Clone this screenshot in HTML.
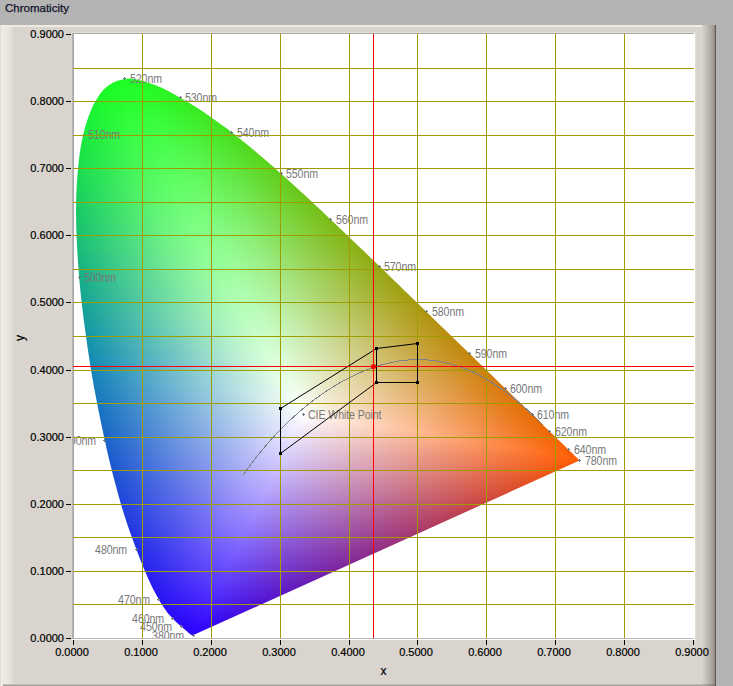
<!DOCTYPE html><html><head><meta charset="utf-8"><style>
*{margin:0;padding:0;box-sizing:border-box}
html,body{width:733px;height:686px;overflow:hidden;background:#b4b4b4;font-family:"Liberation Sans",sans-serif}
#title{position:absolute;left:5px;top:2px;font-size:11.5px;color:#10102a;letter-spacing:0px;-webkit-text-stroke:0.25px #10102a}
#panel{position:absolute;left:0;top:25px;width:716px;height:661px;background:#d9d5ce}
#plot{position:absolute;left:73px;top:34px;width:621px;height:604px;background:#fff;overflow:hidden}
.t{position:absolute;font-size:11px;color:#000;line-height:11px;white-space:nowrap;-webkit-text-stroke:0.2px #000}
.lb{position:absolute;font-size:12.6px;color:#787878;line-height:11px;white-space:nowrap;letter-spacing:-0.1px;transform:scaleX(0.84);transform-origin:0 50%}.lb.l{transform-origin:100% 50%}
#field{position:absolute}
#field i{position:absolute;left:0;width:100%;display:block}
</style></head><body><div id="title">Chromaticity</div><div id="panel"><div style="position:absolute;left:0;top:0;width:14px;height:661px;background:linear-gradient(90deg,#d6d2ca 0px,#efebe1 1px,#eeeae2 5px,#e6e2da 10px,#d9d5ce 14px)"></div><div style="position:absolute;left:0;top:0;width:708px;height:2px;background:linear-gradient(90deg,#e8e4da,#f2eee4 3px,#eeeae0 14px,#eeeae0)"></div><div style="position:absolute;left:3px;top:659px;width:700px;height:1px;background:#c4c0b8"></div><div style="position:absolute;left:3px;top:660px;width:700px;height:1px;background:#a29e98"></div><div style="position:absolute;left:702px;top:0;width:13px;height:661px;background:linear-gradient(90deg,#d9d5ce 0px,#d0ccc2 1.5px,#c2beb6 5px,#aeaaa2 9px,#9a968e 12px,#8c8882 13px)"></div><div style="position:absolute;left:715px;top:0;width:1px;height:661px;background:#5c5954"></div><div style="position:absolute;left:702px;top:659px;width:13px;height:2px;background:rgba(60,56,50,0.22)"></div></div><div id="plot"><div id="field" style="left:2px;top:43px;width:506px;height:560px;clip-path:polygon(118.4px 558.1px,118.4px 558.1px,118.4px 558.1px,118.4px 558.1px,118.4px 558.1px,118.4px 558.1px,118.4px 558.1px,118.3px 558.2px,118.3px 558.2px,118.3px 558.2px,118.3px 558.2px,118.3px 558.2px,118.2px 558.2px,118.2px 558.2px,118.2px 558.2px,118.2px 558.2px,118.1px 558.2px,118.1px 558.2px,118.1px 558.2px,118.1px 558.2px,118.0px 558.2px,118.0px 558.2px,118.0px 558.3px,117.9px 558.3px,117.9px 558.3px,117.9px 558.3px,117.8px 558.3px,117.8px 558.3px,117.8px 558.3px,117.7px 558.3px,117.7px 558.3px,117.6px 558.3px,117.6px 558.3px,117.6px 558.3px,117.5px 558.3px,117.5px 558.3px,117.4px 558.3px,117.4px 558.3px,117.3px 558.3px,117.2px 558.3px,117.2px 558.3px,117.1px 558.3px,117.1px 558.3px,117.0px 558.3px,116.9px 558.2px,116.8px 558.2px,116.8px 558.2px,116.7px 558.1px,116.6px 558.1px,116.5px 558.0px,116.4px 558.0px,116.2px 557.9px,116.1px 557.8px,116.0px 557.7px,115.8px 557.6px,115.7px 557.5px,115.5px 557.4px,115.4px 557.3px,115.2px 557.2px,115.0px 557.0px,114.9px 556.9px,114.7px 556.7px,114.4px 556.5px,114.2px 556.3px,114.0px 556.2px,113.7px 555.9px,113.5px 555.7px,113.2px 555.5px,112.9px 555.3px,112.7px 555.0px,112.4px 554.7px,112.1px 554.5px,111.8px 554.2px,111.4px 553.9px,111.1px 553.6px,110.7px 553.3px,110.3px 553.0px,109.9px 552.6px,109.5px 552.2px,109.0px 551.8px,108.5px 551.4px,108.0px 551.0px,107.5px 550.6px,107.0px 550.1px,106.4px 549.6px,105.8px 549.1px,105.2px 548.6px,104.6px 548.1px,103.9px 547.5px,103.2px 546.9px,102.5px 546.3px,101.8px 545.6px,101.0px 544.9px,100.2px 544.1px,99.4px 543.3px,98.6px 542.5px,97.7px 541.6px,96.8px 540.6px,95.9px 539.6px,95.0px 538.6px,94.0px 537.5px,92.9px 536.2px,91.8px 534.7px,90.7px 533.1px,89.5px 531.4px,88.2px 529.5px,86.8px 527.5px,85.4px 525.2px,84.0px 522.7px,82.5px 520.0px,80.9px 517.2px,79.3px 514.2px,77.6px 510.9px,75.8px 507.2px,74.0px 503.2px,72.1px 498.9px,70.1px 494.4px,68.0px 489.5px,65.9px 484.2px,63.7px 478.6px,61.4px 472.4px,59.0px 465.9px,56.4px 459.0px,53.8px 451.7px,51.2px 443.9px,48.5px 435.6px,45.8px 426.8px,43.2px 417.5px,40.5px 407.6px,37.8px 397.3px,35.1px 386.4px,32.4px 375.2px,29.8px 363.5px,27.2px 351.3px,24.5px 338.6px,21.9px 325.3px,19.3px 311.8px,16.9px 298.2px,14.7px 284.5px,12.6px 270.7px,10.6px 256.6px,8.7px 242.3px,6.9px 228.0px,5.4px 213.9px,4.1px 200.2px,3.1px 186.6px,2.2px 173.2px,1.6px 159.8px,1.2px 146.8px,1.0px 134.2px,1.2px 122.1px,1.6px 110.3px,2.4px 98.8px,3.4px 87.8px,4.6px 77.2px,6.2px 67.2px,8.1px 58.0px,10.3px 49.5px,12.8px 41.5px,15.6px 34.2px,18.6px 27.6px,21.9px 21.7px,25.3px 16.6px,28.9px 12.3px,32.8px 9.0px,36.9px 6.3px,41.1px 4.3px,45.4px 2.9px,49.7px 1.9px,54.1px 1.5px,58.6px 1.9px,63.2px 2.7px,67.9px 4.0px,72.5px 5.5px,77.2px 7.0px,81.8px 8.8px,86.5px 10.8px,91.2px 13.1px,95.9px 15.6px,100.5px 18.1px,105.1px 20.7px,109.6px 23.2px,114.0px 25.8px,118.4px 28.5px,122.8px 31.3px,127.1px 34.1px,131.4px 37.0px,135.7px 39.9px,139.9px 42.9px,144.1px 45.9px,148.3px 49.0px,152.5px 52.1px,156.7px 55.3px,160.9px 58.5px,165.0px 61.8px,169.2px 65.2px,173.3px 68.5px,177.5px 72.0px,181.6px 75.4px,185.7px 78.9px,189.9px 82.4px,194.0px 86.0px,198.1px 89.6px,202.2px 93.2px,206.3px 96.9px,210.4px 100.6px,214.5px 104.3px,218.6px 108.0px,222.7px 111.7px,226.8px 115.5px,230.9px 119.3px,235.0px 123.1px,239.1px 126.9px,243.2px 130.8px,247.3px 134.6px,251.4px 138.5px,255.5px 142.4px,259.6px 146.3px,263.7px 150.2px,267.8px 154.1px,271.9px 158.0px,276.0px 161.9px,280.1px 165.8px,284.1px 169.7px,288.2px 173.6px,292.3px 177.5px,296.4px 181.4px,300.4px 185.3px,304.4px 189.2px,308.5px 193.1px,312.5px 197.0px,316.5px 200.9px,320.4px 204.7px,324.4px 208.6px,328.3px 212.4px,332.3px 216.2px,336.2px 220.0px,340.1px 223.8px,343.9px 227.5px,347.8px 231.2px,351.6px 234.9px,355.3px 238.6px,359.1px 242.3px,362.8px 245.9px,366.5px 249.5px,370.2px 253.0px,373.8px 256.5px,377.4px 260.0px,381.0px 263.5px,384.5px 266.9px,388.0px 270.2px,391.4px 273.5px,394.8px 276.8px,398.1px 280.0px,401.3px 283.2px,404.6px 286.4px,407.7px 289.5px,410.8px 292.5px,413.8px 295.4px,416.8px 298.3px,419.6px 301.0px,422.4px 303.7px,425.1px 306.4px,427.8px 309.0px,430.4px 311.5px,433.0px 314.0px,435.5px 316.5px,438.0px 318.9px,440.4px 321.2px,442.8px 323.5px,445.0px 325.7px,447.2px 327.8px,449.4px 329.8px,451.4px 331.8px,453.4px 333.7px,455.3px 335.6px,457.2px 337.3px,459.0px 339.1px,460.7px 340.8px,462.4px 342.4px,464.0px 344.0px,465.5px 345.5px,467.0px 346.9px,468.5px 348.4px,469.8px 349.7px,471.2px 351.0px,472.4px 352.2px,473.7px 353.4px,474.9px 354.6px,476.0px 355.7px,477.1px 356.8px,478.2px 357.8px,479.2px 358.8px,480.2px 359.7px,481.1px 360.6px,482.1px 361.5px,482.9px 362.4px,483.8px 363.2px,484.6px 364.0px,485.4px 364.8px,486.2px 365.5px,486.9px 366.3px,487.7px 367.0px,488.4px 367.7px,489.1px 368.3px,489.7px 369.0px,490.4px 369.6px,491.0px 370.2px,491.6px 370.8px,492.2px 371.4px,492.8px 371.9px,493.3px 372.5px,493.8px 373.0px,494.3px 373.5px,494.8px 373.9px,495.3px 374.4px,495.7px 374.8px,496.2px 375.2px,496.6px 375.6px,497.0px 376.0px,497.3px 376.3px,497.7px 376.7px,498.0px 377.0px,498.3px 377.3px,498.6px 377.6px,498.9px 377.9px,499.2px 378.2px,499.5px 378.4px,499.7px 378.7px,500.0px 378.9px,500.2px 379.2px,500.4px 379.4px,500.7px 379.6px,500.9px 379.8px,501.1px 380.0px,501.2px 380.1px,501.4px 380.3px,501.5px 380.4px,501.7px 380.6px,501.8px 380.7px,501.9px 380.8px,502.0px 380.9px,502.2px 381.0px,502.3px 381.1px,502.4px 381.3px,502.5px 381.4px,502.6px 381.5px,502.7px 381.6px,502.8px 381.6px,502.9px 381.7px,502.9px 381.8px,503.0px 381.9px,503.1px 382.0px,503.2px 382.0px,503.3px 382.1px,503.3px 382.2px,503.4px 382.3px,503.5px 382.4px,503.6px 382.4px,503.7px 382.5px,503.7px 382.6px,503.8px 382.7px,503.9px 382.7px,504.0px 382.8px,504.0px 382.9px,504.1px 382.9px,504.2px 383.0px,504.2px 383.0px,504.3px 383.1px,504.3px 383.1px,504.4px 383.2px,504.4px 383.2px,504.4px 383.3px,504.5px 383.3px,504.5px 383.3px,504.5px 383.3px,504.5px 383.4px,504.5px 383.4px,504.6px 383.4px,504.6px 383.4px,504.6px 383.4px,504.6px 383.4px,504.6px 383.4px,504.6px 383.4px,504.6px 383.5px)"><i style="top:0px;height:2px;background:linear-gradient(90deg,#19f62e 0px,#1aff22 45px,#27f620 82px,#60cc18 199px,#80b613 300px,#9aa30f 448px,#a19e0e 506px)"></i><i style="top:2px;height:2px;background:linear-gradient(90deg,#19f52e 0px,#1aff22 45px,#27f620 83px,#60cd18 199px,#80b613 299px,#9aa30f 446px,#a19d0e 506px)"></i><i style="top:4px;height:2px;background:linear-gradient(90deg,#19f52f 0px,#1bfe23 42px,#21fa21 71px,#61cc17 202px,#80b513 302px,#9ba20f 450px,#a29d0e 506px)"></i><i style="top:6px;height:2px;background:linear-gradient(90deg,#19f42f 0px,#1bfe24 39px,#21fc24 65px,#2af320 91px,#60cc18 200px,#80b613 299px,#9aa20f 445px,#a29d0e 506px)"></i><i style="top:8px;height:2px;background:linear-gradient(90deg,#19f430 0px,#1bfe25 37px,#22fd26 64px,#2af420 91px,#60cc18 200px,#80b613 298px,#9aa30f 442px,#a29d0e 506px)"></i><i style="top:10px;height:2px;background:linear-gradient(90deg,#19f331 0px,#1cfd26 35px,#23fd27 64px,#2bf31f 94px,#61cc18 201px,#80b613 299px,#9ba20f 443px,#a29d0e 506px)"></i><i style="top:12px;height:2px;background:linear-gradient(90deg,#19f331 0px,#1cfc27 33px,#24fd29 64px,#2cf21f 97px,#61cc17 202px,#80b513 300px,#9ba20f 444px,#a29d0e 506px)"></i><i style="top:14px;height:2px;background:linear-gradient(90deg,#19f232 0px,#1cfc28 31px,#25fe2a 64px,#2ef11f 101px,#61cc17 203px,#80b513 300px,#9ba20f 444px,#a39d0e 506px)"></i><i style="top:16px;height:2px;background:linear-gradient(90deg,#19f232 0px,#1cfb29 29px,#26fe2c 64px,#2ff01f 104px,#62cb17 204px,#81b513 301px,#9ba20f 445px,#a39c0e 506px)"></i><i style="top:18px;height:2px;background:linear-gradient(90deg,#19f133 0px,#1cfa2a 28px,#27fe2d 64px,#2df321 98px,#66c917 214px,#84b312 314px,#9ea00e 464px,#a39c0e 506px)"></i><i style="top:20px;height:2px;background:linear-gradient(90deg,#19f134 0px,#1cf92b 26px,#28fe2f 64px,#2ef323 98px,#34ec1e 114px,#63cb17 207px,#82b413 304px,#9ca10f 448px,#a39c0e 506px)"></i><i style="top:22px;height:2px;background:linear-gradient(90deg,#19f034 0px,#1cf92c 25px,#28ff30 58px,#2ef82a 87px,#33ed1e 114px,#63cb17 207px,#82b413 303px,#9ca10f 446px,#a39c0e 506px)"></i><i style="top:24px;height:2px;background:linear-gradient(90deg,#19f035 0px,#1cf82d 24px,#29ff31 58px,#2ff82c 86px,#35eb1e 118px,#63ca17 209px,#82b413 305px,#9ca10f 448px,#a49c0e 506px)"></i><i style="top:26px;height:2px;background:linear-gradient(90deg,#19ef36 0px,#1cf72e 23px,#2aff32 57px,#30f92e 85px,#36eb1e 120px,#64ca17 210px,#83b412 306px,#9da10f 449px,#a49c0e 506px)"></i><i style="top:28px;height:2px;background:linear-gradient(90deg,#19ef36 0px,#1bf62f 21px,#2bfe33 55px,#31fa31 83px,#38ea1e 124px,#65c917 212px,#83b312 308px,#9da00e 452px,#a49c0e 506px)"></i><i style="top:30px;height:2px;background:linear-gradient(90deg,#19ee37 0px,#1bf630 20px,#2cfe34 55px,#32fb33 82px,#39e91d 127px,#65c917 213px,#84b312 309px,#9ea00e 453px,#a49b0d 506px)"></i><i style="top:32px;height:2px;background:linear-gradient(90deg,#19ee38 0px,#1bf531 19px,#2dfe35 55px,#33fb35 81px,#38ed22 119px,#3ce61d 133px,#67c817 217px,#85b212 314px,#9f9f0e 460px,#a49b0d 506px)"></i><i style="top:34px;height:2px;background:linear-gradient(90deg,#19ed38 0px,#1cf432 19px,#2efe37 55px,#34fc36 81px,#39ed25 118px,#3ce71d 133px,#67c817 217px,#85b212 313px,#9f9f0e 458px,#a59b0d 506px)"></i><i style="top:36px;height:2px;background:linear-gradient(90deg,#19ed39 0px,#1cf333 18px,#2ffe38 55px,#35fc38 81px,#3aee26 118px,#3de61d 136px,#67c817 218px,#85b212 314px,#9f9f0e 459px,#a59b0d 506px)"></i><i style="top:38px;height:2px;background:linear-gradient(90deg,#19ec3a 0px,#1bf334 17px,#30fe39 55px,#36fc39 81px,#3bef29 117px,#3ee51d 138px,#67c717 219px,#86b112 315px,#9f9f0e 460px,#a59b0d 506px)"></i><i style="top:40px;height:2px;background:linear-gradient(90deg,#19eb3a 0px,#1bf235 16px,#31fe3a 55px,#38fd3b 81px,#3cf02b 116px,#40e41c 141px,#68c716 221px,#86b112 317px,#a09f0e 462px,#a59b0d 506px)"></i><i style="top:42px;height:2px;background:linear-gradient(90deg,#19eb3b 0px,#1cf136 16px,#33fe3c 56px,#39fd3c 82px,#3ef02d 117px,#40e31c 143px,#69c616 223px,#87b112 319px,#a09e0e 465px,#a59b0d 506px)"></i><i style="top:44px;height:2px;background:linear-gradient(90deg,#19ea3c 0px,#1bf037 15px,#33fd3d 55px,#3afd3e 82px,#3ff02f 117px,#42e21c 146px,#6ac616 225px,#88b012 321px,#a19e0e 467px,#a69a0d 506px)"></i><i style="top:46px;height:2px;background:linear-gradient(90deg,#19ea3d 0px,#1bef38 14px,#34fd3e 55px,#3bfd3f 83px,#40f131 117px,#43e11c 149px,#6ac516 227px,#88af12 324px,#a29d0e 471px,#a69a0d 506px)"></i><i style="top:48px;height:2px;background:linear-gradient(90deg,#19e93d 0px,#1cef39 14px,#36fd3f 56px,#3dfd40 84px,#42f132 118px,#45e01c 152px,#6bc416 229px,#89af12 326px,#a29d0e 474px,#a69a0d 506px)"></i><i style="top:50px;height:2px;background:linear-gradient(90deg,#18e83e 0px,#1bee3a 13px,#36fd40 56px,#3efd42 84px,#43f134 118px,#46e01c 154px,#6cc416 230px,#89af11 326px,#a29d0e 473px,#a69a0d 506px)"></i><i style="top:52px;height:2px;background:linear-gradient(90deg,#18e83f 0px,#1ced3b 13px,#38fd42 57px,#3ffd43 85px,#44f135 119px,#47df1b 157px,#6dc316 233px,#8aae11 330px,#a39c0e 479px,#a69a0d 506px)"></i><i style="top:54px;height:2px;background:linear-gradient(90deg,#18e740 0px,#1bec3c 12px,#38fc43 56px,#41fd45 86px,#45f136 120px,#48de1b 159px,#6dc316 234px,#8bae11 331px,#a49c0e 480px,#a79a0d 506px)"></i><i style="top:56px;height:2px;background:linear-gradient(90deg,#18e741 0px,#1cec3d 12px,#3afc44 57px,#42fd46 87px,#47f138 121px,#4add1b 162px,#6ec215 237px,#8cad11 334px,#a49b0d 484px,#a7990d 506px)"></i><i style="top:58px;height:2px;background:linear-gradient(90deg,#18e641 0px,#1beb3e 11px,#3afc45 57px,#43fe47 87px,#48f23a 120px,#4adc1b 164px,#6fc215 238px,#8cad11 335px,#a59b0d 485px,#a7990d 506px)"></i><i style="top:60px;height:2px;background:linear-gradient(90deg,#18e542 0px,#1bea3f 11px,#3cfc47 58px,#44fe49 88px,#49f23b 121px,#4cdb1b 167px,#70c115 241px,#8dac11 339px,#a69a0d 491px,#a7990d 506px)"></i><i style="top:62px;height:2px;background:linear-gradient(90deg,#18e543 0px,#1be940 10px,#3cfb48 57px,#46fe4a 89px,#4bf23d 122px,#4dda1a 169px,#71c115 242px,#8dac11 340px,#a69a0d 492px,#a8990d 506px)"></i><i style="top:64px;height:2px;background:linear-gradient(90deg,#18e444 0px,#1be841 10px,#3dfb49 57px,#47fe4b 89px,#4cf33f 121px,#4ddb1b 168px,#72bf15 247px,#8fab11 346px,#a7990d 501px,#a8990d 506px)"></i><i style="top:66px;height:2px;background:linear-gradient(90deg,#18e345 0px,#1be842 10px,#3efb4a 58px,#48fe4d 90px,#4df340 122px,#4edb1d 169px,#74be15 251px,#90aa10 352px,#a8990d 506px)"></i><i style="top:68px;height:2px;background:linear-gradient(90deg,#18e346 0px,#1be743 9px,#3ffb4b 58px,#49fe4e 91px,#4ef342 123px,#4fdb1e 170px,#53d61a 180px,#75be15 253px,#91a910 354px,#a8990d 506px)"></i><i style="top:70px;height:2px;background:linear-gradient(90deg,#18e246 0px,#1ce644 10px,#40fb4c 59px,#4bfe4f 92px,#50f343 124px,#50db1f 171px,#53d61a 181px,#75bd14 254px,#91a910 355px,#a8980d 506px)"></i><i style="top:72px;height:2px;background:linear-gradient(90deg,#18e147 0px,#1be545 9px,#40fa4d 58px,#4cfe51 92px,#51f345 124px,#52dc22 170px,#53d619 182px,#75bd14 254px,#91a910 354px,#a9980d 506px)"></i><i style="top:74px;height:2px;background:linear-gradient(90deg,#18e048 0px,#1ce546 9px,#42fa4f 59px,#4dfe52 93px,#52f447 124px,#53dd24 170px,#54d519 184px,#76bd14 256px,#92a910 356px,#a9980d 506px)"></i><i style="top:76px;height:2px;background:linear-gradient(90deg,#18e049 0px,#1ce447 9px,#42fa50 59px,#4efe53 93px,#54f448 124px,#55dd26 170px,#55d419 186px,#77bc14 258px,#93a810 359px,#a9980d 506px)"></i><i style="top:78px;height:2px;background:linear-gradient(90deg,#18df4a 0px,#1de449 10px,#44fa51 60px,#50fe55 94px,#55f44a 125px,#56dd27 171px,#56d419 188px,#78bb14 260px,#93a710 361px,#a9980d 506px)"></i><i style="top:80px;height:2px;background:linear-gradient(90deg,#18de4b 0px,#1ce34a 9px,#44f952 60px,#50ff56 91px,#56f74f 119px,#57e230 163px,#57d319 190px,#79bb14 262px,#94a710 364px,#aa980d 506px)"></i><i style="top:82px;height:2px;background:linear-gradient(90deg,#18de4c 0px,#1de24b 9px,#45f954 60px,#51ff57 91px,#57f851 118px,#59e333 162px,#59d219 193px,#7aba14 265px,#95a610 367px,#aa970d 506px)"></i><i style="top:84px;height:2px;background:linear-gradient(90deg,#18dd4d 0px,#1de14c 9px,#45f855 60px,#52ff58 91px,#58f853 118px,#5ae436 161px,#5ad119 195px,#7bb914 267px,#96a610 370px,#aa970d 506px)"></i><i style="top:86px;height:2px;background:linear-gradient(90deg,#18dc4e 0px,#1fe24d 11px,#47f956 62px,#54ff5a 92px,#59f854 119px,#5be437 162px,#5bd018 197px,#7bb914 269px,#97a510 372px,#aa970d 506px)"></i><i style="top:88px;height:2px;background:linear-gradient(90deg,#18db4e 0px,#20e14e 12px,#49f957 63px,#55ff5b 93px,#5bf856 120px,#5de438 163px,#5cd018 199px,#7cb813 271px,#97a50f 375px,#ab970d 506px)"></i><i style="top:90px;height:2px;background:linear-gradient(90deg,#18db4f 0px,#1fe04f 11px,#49f859 63px,#56ff5c 94px,#5cf857 121px,#5ee43a 164px,#5dce18 202px,#7db713 274px,#98a40f 379px,#ab970c 506px)"></i><i style="top:92px;height:2px;background:linear-gradient(90deg,#17da50 0px,#1fe050 11px,#4af85a 63px,#57ff5e 94px,#5df959 120px,#5fe53d 162px,#5ece18 204px,#7eb713 276px,#99a30f 381px,#ab960c 506px)"></i><i style="top:94px;height:2px;background:linear-gradient(90deg,#17d951 0px,#22e052 14px,#4cf85b 66px,#59ff5f 96px,#5ef85a 122px,#61e53e 164px,#5fcd18 206px,#7fb613 278px,#9aa30f 384px,#ab960c 506px)"></i><i style="top:96px;height:2px;background:linear-gradient(90deg,#17d852 0px,#29e355 21px,#50fa5d 71px,#5cfe61 104px,#61f455 134px,#61dd32 179px,#60cc18 208px,#80b613 280px,#9aa20f 386px,#ac960c 506px)"></i><i style="top:98px;height:2px;background:linear-gradient(90deg,#17d853 0px,#4ff85e 68px,#5cff62 98px,#61f85c 124px,#63e540 166px,#62cb17 211px,#81b513 284px,#9ca20f 392px,#ac960c 506px)"></i><i style="top:100px;height:2px;background:linear-gradient(90deg,#17d754 0px,#50f85f 68px,#5dff63 98px,#62f95e 124px,#64e542 166px,#63ca17 213px,#82b413 286px,#9ca10f 394px,#ac960c 506px)"></i><i style="top:102px;height:2px;background:linear-gradient(90deg,#17d655 0px,#50f760 68px,#5eff64 98px,#63fa60 123px,#66e746 164px,#64ca17 215px,#83b312 288px,#9da00f 397px,#ac960c 506px)"></i><i style="top:104px;height:2px;background:linear-gradient(90deg,#17d556 0px,#51f761 68px,#5fff65 99px,#65fa62 124px,#67e747 165px,#65c917 217px,#84b312 290px,#9ea00e 399px,#ad950c 506px)"></i><i style="top:106px;height:2px;background:linear-gradient(90deg,#17d457 0px,#51f762 68px,#61ff67 99px,#66fa63 124px,#68e84a 164px,#66c817 219px,#85b212 292px,#9f9f0e 402px,#ad950c 506px)"></i><i style="top:108px;height:2px;background:linear-gradient(90deg,#17d458 0px,#53f664 69px,#62ff68 100px,#67fa65 125px,#6ae84b 165px,#68c716 222px,#86b112 296px,#a09f0e 407px,#ad950c 506px)"></i><i style="top:110px;height:2px;background:linear-gradient(90deg,#17d359 0px,#53f665 69px,#63ff69 101px,#69fa66 126px,#6be84c 166px,#69c616 224px,#87b112 298px,#a09e0e 410px,#ad950c 506px)"></i><i style="top:112px;height:2px;background:linear-gradient(90deg,#17d25a 0px,#54f566 69px,#64fe6a 101px,#6afa68 126px,#6ce94f 165px,#6ac516 226px,#88b012 300px,#a19e0e 413px,#ae950c 506px)"></i><i style="top:114px;height:2px;background:linear-gradient(90deg,#17d15b 0px,#55f567 70px,#66fe6c 102px,#6bfa69 127px,#6ee950 166px,#6bc516 228px,#89af12 302px,#a29d0e 415px,#ae940c 506px)"></i><i style="top:116px;height:2px;background:linear-gradient(90deg,#17d05c 0px,#55f568 70px,#67fe6d 102px,#6cfb6b 127px,#6fea53 165px,#6cc416 230px,#89af11 304px,#a39d0e 418px,#ae940c 506px)"></i><i style="top:118px;height:2px;background:linear-gradient(90deg,#17d05d 0px,#57f56a 71px,#68fe6e 103px,#6efb6c 128px,#70ea54 166px,#6dc316 232px,#8aae11 307px,#a39c0e 422px,#af940c 506px)"></i><i style="top:120px;height:2px;background:linear-gradient(90deg,#17cf5e 0px,#58f56b 72px,#69fe70 104px,#6ffb6d 129px,#72ea56 167px,#6fc215 235px,#8cad11 310px,#a49b0d 426px,#af940c 506px)"></i><i style="top:122px;height:2px;background:linear-gradient(90deg,#17ce5f 0px,#58f46c 72px,#6bfe71 105px,#70fb6f 130px,#73ea57 168px,#70c115 237px,#8cad11 312px,#a59b0d 429px,#af940c 506px)"></i><i style="top:124px;height:2px;background:linear-gradient(90deg,#17cd60 0px,#59f46d 73px,#6cfe72 106px,#72fb70 131px,#74ea58 169px,#71c115 239px,#8dac11 315px,#a69a0d 433px,#af930c 506px)"></i><i style="top:126px;height:2px;background:linear-gradient(90deg,#17cc61 0px,#5af46f 73px,#6dfe73 107px,#73fb71 132px,#75ea59 170px,#72c015 241px,#8eab11 317px,#a79a0d 436px,#b0930c 506px)"></i><i style="top:128px;height:2px;background:linear-gradient(90deg,#16cc62 0px,#5bf470 74px,#6ffe75 108px,#74fb73 133px,#77ea5a 171px,#73bf15 243px,#8fab11 319px,#a7990d 438px,#b0930c 506px)"></i><i style="top:130px;height:2px;background:linear-gradient(90deg,#16cb63 0px,#5cf371 75px,#70fe76 109px,#75fb74 133px,#78eb5d 170px,#74c41d 236px,#74be15 246px,#90aa10 323px,#a9980d 444px,#b0930c 506px)"></i><i style="top:132px;height:2px;background:linear-gradient(90deg,#16ca64 0px,#5df372 76px,#71fe77 110px,#77fb76 134px,#79eb5e 171px,#75c31d 238px,#75bd14 248px,#91a910 325px,#a9980d 447px,#b1930c 506px)"></i><i style="top:134px;height:2px;background:linear-gradient(90deg,#16c965 0px,#5ef374 76px,#72fe79 110px,#78fc78 133px,#7bec62 169px,#77c826 231px,#76bc14 250px,#92a810 328px,#aa970d 451px,#b1920c 506px)"></i><i style="top:136px;height:2px;background:linear-gradient(90deg,#16c866 0px,#5ff375 77px,#74fe7a 111px,#79fc79 134px,#7cec63 170px,#78c726 233px,#77bc14 252px,#93a810 330px,#ab970c 454px,#b1920c 506px)"></i><i style="top:138px;height:2px;background:linear-gradient(90deg,#16c767 0px,#60f376 78px,#75fe7b 112px,#7afc7a 135px,#7dec65 171px,#79c626 235px,#78bb14 254px,#94a710 332px,#ac960c 457px,#b1920c 506px)"></i><i style="top:140px;height:2px;background:linear-gradient(90deg,#16c768 0px,#62f277 79px,#76fe7d 113px,#7cfc7b 136px,#7fed67 171px,#7bc729 234px,#7aba14 256px,#95a610 335px,#ac960c 461px,#b2920b 506px)"></i><i style="top:142px;height:2px;background:linear-gradient(90deg,#16c669 0px,#63f279 80px,#78fe7e 114px,#7dfc7d 137px,#80ed68 172px,#7cc72a 235px,#7bb914 258px,#96a610 337px,#ad950c 464px,#b2910b 506px)"></i><i style="top:144px;height:2px;background:linear-gradient(90deg,#16c56b 0px,#64f27a 81px,#79fe7f 115px,#7ffc7e 138px,#81ec69 173px,#7dc72a 237px,#7cb914 260px,#97a50f 339px,#ae950c 467px,#b2910b 506px)"></i><i style="top:146px;height:2px;background:linear-gradient(90deg,#16c46c 0px,#65f27b 82px,#7afe80 116px,#80fc80 138px,#83ed6b 173px,#7ec82e 236px,#7db813 262px,#98a40f 342px,#af940c 471px,#b3910b 506px)"></i><i style="top:148px;height:2px;background:linear-gradient(90deg,#16c36d 0px,#66f27d 83px,#7cfe82 118px,#81fc80 141px,#84ec6b 176px,#7fc326 245px,#7eb713 264px,#99a40f 344px,#af930c 474px,#b3910b 506px)"></i><i style="top:150px;height:2px;background:linear-gradient(90deg,#16c26e 0px,#67f27e 84px,#7dfe83 119px,#83fc82 142px,#85ec6c 177px,#80c226 247px,#7fb613 266px,#9aa30f 347px,#b0930c 479px,#b3910b 506px)"></i><i style="top:152px;height:2px;background:linear-gradient(90deg,#16c16f 0px,#69f27f 85px,#7ffe84 120px,#84fc83 142px,#86ec6e 177px,#82c42a 245px,#80b613 268px,#9aa30f 349px,#b1920c 481px,#b4900b 506px)"></i><i style="top:154px;height:2px;background:linear-gradient(90deg,#16c170 0px,#6af280 86px,#80fe86 121px,#85fc85 143px,#88ed70 177px,#83c52d 244px,#81b513 270px,#9ba20f 352px,#b2920b 486px,#b4900b 506px)"></i><i style="top:156px;height:2px;background:linear-gradient(90deg,#16c071 0px,#6bf282 87px,#81fe87 122px,#87fc86 144px,#89ed71 178px,#84c42d 246px,#82b412 273px,#9da10f 356px,#b3910b 492px,#b4900b 506px)"></i><i style="top:158px;height:2px;background:linear-gradient(90deg,#16bf72 0px,#6df283 89px,#83fe88 123px,#88fc87 145px,#8aed72 179px,#85c32d 248px,#84b312 275px,#9da00e 358px,#b3900b 495px,#b5900b 506px)"></i><i style="top:160px;height:2px;background:linear-gradient(90deg,#16be73 0px,#6ef284 90px,#84fe8a 124px,#89fc89 146px,#8ced73 180px,#86c22c 251px,#85b212 277px,#9ea00e 361px,#b4900b 500px,#b58f0b 506px)"></i><i style="top:162px;height:2px;background:linear-gradient(90deg,#15bd74 0px,#6ff286 91px,#85fe8b 125px,#8bfc8a 147px,#8ded75 181px,#87c12c 253px,#86b112 279px,#9f9f0e 363px,#b58f0b 503px,#b58f0b 506px)"></i><i style="top:164px;height:2px;background:linear-gradient(90deg,#15bc75 0px,#71f287 93px,#87fe8c 127px,#8cfb8b 150px,#8eeb73 185px,#87b81d 269px,#87b112 281px,#a09e0e 366px,#b68f0b 506px)"></i><i style="top:166px;height:2px;background:linear-gradient(90deg,#15bb76 0px,#72f289 94px,#88fe8e 128px,#8dfc8c 150px,#90ec76 184px,#89bd27 262px,#88b012 283px,#a19e0e 369px,#b68f0b 506px)"></i><i style="top:168px;height:2px;background:linear-gradient(90deg,#15bb77 0px,#3bd17e 37px,#79f58b 101px,#8bff8f 132px,#8ffb8c 154px,#91e973 190px,#89af12 285px,#a29d0e 371px,#b68e0b 506px)"></i><i style="top:170px;height:2px;background:linear-gradient(90deg,#15ba79 0px,#2ec97d 25px,#76f28b 97px,#8bfe90 130px,#90fc8f 152px,#92ec79 186px,#8bba24 268px,#8aae11 287px,#a39c0e 374px,#b78e0b 506px)"></i><i style="top:172px;height:2px;background:linear-gradient(90deg,#15b97a 0px,#27c47c 18px,#74f18c 95px,#8cfe92 130px,#91fc91 152px,#93ed7b 185px,#8dbe2d 262px,#8bae11 289px,#a49c0e 376px,#b78e0b 506px)"></i><i style="top:174px;height:2px;background:linear-gradient(90deg,#15b87b 0px,#22c07c 14px,#74ef8d 94px,#8dfe93 130px,#92fd92 151px,#95ef7f 183px,#90c53a 252px,#8cad11 291px,#a59b0d 379px,#b78e0b 506px)"></i><i style="top:176px;height:2px;background:linear-gradient(90deg,#15b77c 0px,#1fbd7d 11px,#73ee8e 93px,#8efd94 130px,#94fd94 152px,#96ef80 184px,#91c43a 254px,#8dac11 293px,#a69a0d 381px,#b88d0b 506px)"></i><i style="top:178px;height:2px;background:linear-gradient(90deg,#15b67d 0px,#1dbc7e 10px,#74ee8f 94px,#8ffd95 131px,#95fd95 153px,#97ef82 185px,#92c339 257px,#8eab11 295px,#a79a0d 384px,#b88d0b 506px)"></i><i style="top:180px;height:2px;background:linear-gradient(90deg,#15b57e 0px,#1cba7e 9px,#75ee90 95px,#90fd97 132px,#96fd97 153px,#99f084 184px,#94c842 250px,#8faa11 297px,#a8990d 387px,#b88d0a 506px)"></i><i style="top:182px;height:2px;background:linear-gradient(90deg,#15b47f 0px,#1bb97f 8px,#75ed91 95px,#91fd98 132px,#98fd98 154px,#9af086 185px,#95c741 253px,#91a910 300px,#a9980d 391px,#b98d0a 506px)"></i><i style="top:184px;height:2px;background:linear-gradient(90deg,#15b480 0px,#19b780 7px,#77ed93 96px,#93fd99 133px,#99fd99 155px,#9bef87 186px,#96c540 256px,#92a910 302px,#aa970d 394px,#b98c0a 506px)"></i><i style="top:186px;height:2px;background:linear-gradient(90deg,#15b381 0px,#1ab781 8px,#78ed94 97px,#94fd9a 134px,#9afd9b 156px,#9def88 187px,#97c440 258px,#93a810 304px,#ab970d 397px,#ba8c0a 506px)"></i><i style="top:188px;height:2px;background:linear-gradient(90deg,#15b282 0px,#1ab682 8px,#79ed95 98px,#95fd9c 135px,#9cfd9c 157px,#9eef89 188px,#98c33f 261px,#94a710 306px,#ab960c 399px,#ba8c0a 506px)"></i><i style="top:190px;height:2px;background:linear-gradient(90deg,#15b184 0px,#1ab583 8px,#7aed97 99px,#97fd9d 137px,#9dfd9d 158px,#9fef8a 189px,#99c23e 264px,#95a610 308px,#ac960c 402px,#ba8c0a 506px)"></i><i style="top:192px;height:2px;background:linear-gradient(90deg,#15b085 0px,#1ab484 8px,#7bed98 100px,#98fd9e 138px,#9efd9f 159px,#a0f08c 189px,#9bc342 262px,#96a610 310px,#ad950c 405px,#bb8b0a 506px)"></i><i style="top:194px;height:2px;background:linear-gradient(90deg,#15af86 0px,#18b285 7px,#7cec99 101px,#9afda0 139px,#a0fda0 160px,#a2f08e 190px,#9cc241 265px,#97a50f 312px,#ae940c 408px,#bb8b0a 506px)"></i><i style="top:196px;height:2px;background:linear-gradient(90deg,#14ae87 0px,#18b186 7px,#7dec9a 102px,#9bfda1 140px,#a1fda1 161px,#a3f08f 191px,#9dc140 268px,#98a40f 314px,#af940c 410px,#bb8b0a 506px)"></i><i style="top:198px;height:2px;background:linear-gradient(90deg,#14ad88 0px,#18b087 7px,#7fed9c 104px,#9cfda2 141px,#a2fda3 162px,#a4f090 192px,#9ebf3e 272px,#99a30f 316px,#b0930c 413px,#bc8a0a 506px)"></i><i style="top:200px;height:2px;background:linear-gradient(90deg,#14ac89 0px,#18af88 7px,#80ec9d 105px,#9dfda4 142px,#a4fda4 163px,#a6f091 193px,#9ebd3b 276px,#9aa20f 318px,#b1920c 416px,#bc8a0a 506px)"></i><i style="top:202px;height:2px;background:linear-gradient(90deg,#14ac8a 0px,#18af89 8px,#81ec9e 106px,#9ffda5 143px,#a5fda5 164px,#a7f092 194px,#9fba38 281px,#9ca20f 320px,#b2920b 419px,#bd8a0a 506px)"></i><i style="top:204px;height:2px;background:linear-gradient(90deg,#14ab8b 0px,#18ae8a 8px,#83eda0 108px,#a1fda6 145px,#a6fda7 165px,#a8f094 194px,#a1bc3d 278px,#9da10f 322px,#b3910b 422px,#bd8a0a 506px)"></i><i style="top:206px;height:2px;background:linear-gradient(90deg,#14aa8c 0px,#18ad8b 8px,#85eca1 109px,#a2fda8 146px,#a8fda8 166px,#aaf096 195px,#a2ba3a 283px,#9ea00e 324px,#b4900b 425px,#bd890a 506px)"></i><i style="top:208px;height:2px;background:linear-gradient(90deg,#14a98d 0px,#17ac8c 7px,#86eca2 110px,#a3fda9 147px,#a9fda9 167px,#abf097 196px,#a2b636 289px,#9f9f0e 326px,#b5900b 428px,#be890a 506px)"></i><i style="top:210px;height:2px;background:linear-gradient(90deg,#14a88e 0px,#17ab8d 8px,#88eda4 112px,#a4fdaa 148px,#aafdaa 168px,#acf098 197px,#a3b331 295px,#a09e0e 329px,#b68f0b 433px,#be890a 506px)"></i><i style="top:212px;height:2px;background:linear-gradient(90deg,#14a790 0px,#17aa8f 8px,#89eda5 113px,#a6fdab 149px,#acfdac 169px,#adf099 198px,#a4af2c 302px,#a19e0e 331px,#b78e0b 436px,#bf880a 506px)"></i><i style="top:214px;height:2px;background:linear-gradient(90deg,#14a691 0px,#17a990 8px,#8aeca6 114px,#a8fdad 151px,#adfdad 171px,#afef99 200px,#a3a419 321px,#a29d0e 333px,#b88e0b 439px,#bf8809 506px)"></i><i style="top:216px;height:2px;background:linear-gradient(90deg,#14a592 0px,#17a891 8px,#8ceda8 116px,#a9fdae 152px,#affdae 172px,#b0ef9b 201px,#a39e11 330px,#a49b0d 338px,#b98c0a 447px,#c08809 506px)"></i><i style="top:218px;height:2px;background:linear-gradient(90deg,#14a593 0px,#16a792 8px,#8deda9 117px,#aafdb0 153px,#b0fdb0 172px,#b1f09e 200px,#a6aa26 313px,#a59b0d 337px,#b98c0a 445px,#c08709 506px)"></i><i style="top:220px;height:2px;background:linear-gradient(90deg,#14a494 0px,#16a693 8px,#8eecaa 118px,#abfdb1 154px,#b1fdb1 173px,#b3f09f 201px,#a7a51e 322px,#a69a0d 339px,#ba8c0a 448px,#c08709 506px)"></i><i style="top:222px;height:2px;background:linear-gradient(90deg,#14a395 0px,#17a694 9px,#90edac 120px,#adfdb2 156px,#b3fdb2 175px,#b4ef9e 204px,#a79a0d 341px,#bb8b0a 452px,#c18709 506px)"></i><i style="top:224px;height:2px;background:linear-gradient(90deg,#14a296 0px,#16a595 9px,#92edad 122px,#affdb4 157px,#b4fdb3 176px,#b5ef9f 205px,#a8990d 343px,#bc8a0a 455px,#c18609 506px)"></i><i style="top:226px;height:2px;background:linear-gradient(90deg,#14a197 0px,#16a496 9px,#93edaf 123px,#b0fdb5 158px,#b5fdb5 177px,#b6efa0 206px,#a9980d 345px,#bd8a0a 458px,#c28609 506px)"></i><i style="top:228px;height:2px;background:linear-gradient(90deg,#14a098 0px,#16a397 9px,#95edb0 125px,#b2fdb6 160px,#b7fdb6 179px,#b8eea1 208px,#aa970d 347px,#be890a 462px,#c28609 506px)"></i><i style="top:230px;height:2px;background:linear-gradient(90deg,#139f99 0px,#16a298 9px,#96edb1 126px,#b3fdb8 161px,#b8fdb7 180px,#b9eea2 209px,#ab970c 349px,#bf880a 465px,#c38509 506px)"></i><i style="top:232px;height:2px;background:linear-gradient(90deg,#139e9a 0px,#16a299 10px,#98eeb3 128px,#b4fdb9 162px,#b9fdb8 181px,#baeea3 210px,#ac960c 351px,#bf8809 468px,#c38509 506px)"></i><i style="top:234px;height:2px;background:linear-gradient(90deg,#139e9c 0px,#16a19a 10px,#99edb4 129px,#b5fdba 163px,#bbfdba 182px,#bceea4 211px,#ad950c 353px,#c08709 472px,#c48509 506px)"></i><i style="top:236px;height:2px;background:linear-gradient(90deg,#139d9d 0px,#16a09b 10px,#9beeb6 131px,#b7febc 165px,#bcfdbb 183px,#bdeea5 212px,#ae940c 355px,#c18609 475px,#c48409 506px)"></i><i style="top:238px;height:2px;background:linear-gradient(90deg,#139c9e 0px,#159f9c 10px,#9ceeb7 132px,#b9febd 166px,#befdbc 184px,#beeea6 213px,#af930c 357px,#c28609 479px,#c58409 506px)"></i><i style="top:240px;height:2px;background:linear-gradient(90deg,#139b9f 0px,#159e9d 10px,#9feeb8 134px,#bafebe 168px,#bffcbd 186px,#bfeda5 216px,#b0930c 359px,#c38509 483px,#c58409 506px)"></i><i style="top:242px;height:2px;background:linear-gradient(90deg,#139aa0 0px,#169d9e 11px,#a1eeba 136px,#bcfec0 169px,#c0fcbe 187px,#c0eda7 217px,#b2920c 361px,#c48509 486px,#c68309 506px)"></i><i style="top:244px;height:2px;background:linear-gradient(90deg,#1399a1 0px,#159c9f 11px,#a2eebb 137px,#bdfec1 170px,#c2fcc0 188px,#c2eda8 218px,#b3910b 363px,#c58409 490px,#c68308 506px)"></i><i style="top:246px;height:2px;background:linear-gradient(90deg,#1398a2 0px,#159ba0 11px,#a4efbd 139px,#bffec2 172px,#c3fcc0 190px,#c3eba7 221px,#b4900b 365px,#c68309 494px,#c78308 506px)"></i><i style="top:248px;height:2px;background:linear-gradient(90deg,#1398a3 0px,#159aa1 11px,#a6efbe 141px,#c0fec4 173px,#c4fcc2 191px,#c4eba8 222px,#b58f0b 367px,#c78308 498px,#c78208 506px)"></i><i style="top:250px;height:2px;background:linear-gradient(90deg,#1397a4 0px,#159aa3 12px,#a7efbf 142px,#c1fec5 174px,#c6fcc4 191px,#c6edac 220px,#b68f0b 370px,#c88208 504px,#c88208 506px)"></i><i style="top:252px;height:2px;background:linear-gradient(90deg,#1396a5 0px,#1599a4 12px,#a9efc1 144px,#c3fec6 176px,#c7fcc4 193px,#c7ebaa 224px,#b78e0b 372px,#c88108 506px)"></i><i style="top:254px;height:2px;background:linear-gradient(90deg,#1395a6 0px,#1598a5 12px,#abefc2 146px,#c4fec8 177px,#c8fcc6 194px,#c8ebab 225px,#b88d0b 374px,#c98108 506px)"></i><i style="top:256px;height:2px;background:linear-gradient(90deg,#1394a7 0px,#1497a6 12px,#adf0c4 148px,#c6fec9 179px,#cafcc6 196px,#c9eaaa 228px,#b98c0a 376px,#c98108 506px)"></i><i style="top:258px;height:2px;background:linear-gradient(90deg,#1393a8 0px,#1596a7 13px,#aff0c5 150px,#c8fecb 180px,#cbfcc8 197px,#cae9aa 230px,#ba8b0a 378px,#ca8008 506px)"></i><i style="top:260px;height:2px;background:linear-gradient(90deg,#1392aa 0px,#1595a8 13px,#b0f0c6 151px,#c9fecc 181px,#cdfcc9 198px,#cbe9ab 231px,#bc8b0a 380px,#ca8008 506px)"></i><i style="top:262px;height:2px;background:linear-gradient(90deg,#1392ab 0px,#1494a9 13px,#b2f0c8 153px,#cbfecd 183px,#cefcca 199px,#cce8ab 233px,#bd8a0a 382px,#cb7f08 506px)"></i><i style="top:264px;height:2px;background:linear-gradient(90deg,#1291ac 0px,#1493aa 13px,#b4f1c9 155px,#ccfecf 184px,#cffbcb 200px,#cee8ac 234px,#be890a 384px,#cc7f08 506px)"></i><i style="top:266px;height:2px;background:linear-gradient(90deg,#1290ad 0px,#1593ab 14px,#b6f1cb 157px,#cdfed0 185px,#d1fbcd 201px,#cfe7ac 236px,#bf880a 386px,#cc7f08 506px)"></i><i style="top:268px;height:2px;background:linear-gradient(90deg,#128fae 0px,#1492ac 14px,#b8f2cc 159px,#cfffd1 187px,#d2fbcd 203px,#cfe3a7 243px,#c08709 388px,#cd7e07 506px)"></i><i style="top:270px;height:2px;background:linear-gradient(90deg,#128eaf 0px,#1491ad 14px,#baf2ce 161px,#d0fed3 188px,#d3fbcf 204px,#d0e2a5 246px,#c18709 390px,#cd7e07 506px)"></i><i style="top:272px;height:2px;background:linear-gradient(90deg,#128db0 0px,#1590ae 15px,#bcf2cf 163px,#d2ffd4 190px,#d5fbcf 206px,#d1dc9c 257px,#c28609 392px,#ce7d07 506px)"></i><i style="top:274px;height:2px;background:linear-gradient(90deg,#128cb1 0px,#148faf 15px,#bef3d1 165px,#d3ffd5 191px,#d6fbd1 206px,#d2dfa2 253px,#c38509 394px,#ce7d07 506px)"></i><i style="top:276px;height:2px;background:linear-gradient(90deg,#128cb2 0px,#148eb0 15px,#c0f3d2 167px,#d5ffd7 192px,#d7fbd2 207px,#d3dda0 257px,#c48409 396px,#cf7d07 506px)"></i><i style="top:278px;height:2px;background:linear-gradient(90deg,#128bb3 0px,#148db1 15px,#c2f4d4 169px,#d6ffd8 194px,#d9fbd3 209px,#d2d08b 278px,#c58409 398px,#d07c07 506px)"></i><i style="top:280px;height:2px;background:linear-gradient(90deg,#128ab4 0px,#148db3 16px,#c5f4d5 171px,#d8ffd9 195px,#dafad4 210px,#d2c980 290px,#c68308 400px,#d07c07 506px)"></i><i style="top:282px;height:2px;background:linear-gradient(90deg,#1289b5 0px,#148cb4 16px,#c7f4d7 173px,#d9ffdb 197px,#dbfad5 212px,#cb982e 367px,#c88208 403px,#d17b07 506px)"></i><i style="top:284px;height:2px;background:linear-gradient(90deg,#1288b5 0px,#138bb4 16px,#caf5d8 176px,#dbffdc 198px,#ddfad6 213px,#c98108 405px,#d27b07 506px)"></i><i style="top:286px;height:2px;background:linear-gradient(90deg,#1387b6 0px,#148ab5 17px,#ccf6da 178px,#dcffdd 200px,#def9d5 216px,#ca8008 407px,#d27a07 506px)"></i><i style="top:288px;height:2px;background:linear-gradient(90deg,#1386b6 0px,#1489b6 17px,#cff7db 181px,#deffdf 201px,#dff9d7 217px,#cb8008 409px,#d37a07 506px)"></i><i style="top:290px;height:2px;background:linear-gradient(90deg,#1385b7 0px,#1488b6 17px,#d2f8dd 184px,#dfffe0 203px,#e0f8d6 220px,#cc7f08 411px,#d37906 506px)"></i><i style="top:292px;height:2px;background:linear-gradient(90deg,#1384b7 0px,#1587b7 18px,#d4f8df 186px,#e0ffe1 204px,#e2f8d7 221px,#cd7e07 413px,#d47906 506px)"></i><i style="top:294px;height:2px;background:linear-gradient(90deg,#1383b8 0px,#1586b7 18px,#b8e7da 160px,#dffee2 199px,#e3fce0 213px,#dccf93 286px,#ce7d07 415px,#d57806 506px)"></i><i style="top:296px;height:2px;background:linear-gradient(90deg,#1382b8 0px,#1585b8 18px,#9ed7d6 138px,#defce3 197px,#e4fee3 211px,#e2ebc4 243px,#cf7c07 417px,#d67806 506px)"></i><i style="top:298px;height:2px;background:linear-gradient(90deg,#1381b9 0px,#1584b8 19px,#98d3d6 133px,#dffce4 198px,#e5fee4 212px,#e3e9c2 247px,#d07c07 419px,#d67706 506px)"></i><i style="top:300px;height:2px;background:linear-gradient(90deg,#1480b9 0px,#1583b9 19px,#99d2d7 134px,#e1fde6 200px,#e7fee5 213px,#e4e7bf 251px,#d17b07 421px,#d77706 506px)"></i><i style="top:302px;height:2px;background:linear-gradient(90deg,#1480ba 0px,#1582b9 19px,#9cd3d9 137px,#e3fde7 202px,#e8fde6 215px,#e1d099 288px,#d37a07 423px,#d87606 506px)"></i><i style="top:304px;height:2px;background:linear-gradient(90deg,#147fba 0px,#1681ba 20px,#a2d6db 142px,#e5fde9 204px,#eafde7 217px,#d47906 425px,#d87606 506px)"></i><i style="top:306px;height:2px;background:linear-gradient(90deg,#147ebb 0px,#1680ba 20px,#a7d8dd 147px,#e7feea 206px,#ebfde8 218px,#d57806 427px,#d97506 506px)"></i><i style="top:308px;height:2px;background:linear-gradient(90deg,#147dbb 0px,#157fbb 20px,#aedbe0 153px,#e9feeb 208px,#ecfce8 220px,#d67806 429px,#da7506 506px)"></i><i style="top:310px;height:2px;background:linear-gradient(90deg,#147cbc 0px,#167ebc 21px,#b5dfe2 160px,#ebfeed 210px,#edfcea 221px,#d77706 431px,#db7405 506px)"></i><i style="top:312px;height:2px;background:linear-gradient(90deg,#157bbc 0px,#167dbc 21px,#bde3e5 167px,#edfeee 212px,#effcea 223px,#d87606 433px,#db7405 506px)"></i><i style="top:314px;height:2px;background:linear-gradient(90deg,#157abd 0px,#167cbc 21px,#c5e6e7 174px,#eefef0 213px,#f0fbeb 224px,#d97506 435px,#dc7305 506px)"></i><i style="top:316px;height:2px;background:linear-gradient(90deg,#1579bd 0px,#177bbd 22px,#cceaea 181px,#f0fff1 215px,#f1fbeb 226px,#da7405 437px,#dd7305 506px)"></i><i style="top:318px;height:2px;background:linear-gradient(90deg,#1578be 0px,#167abe 22px,#d4eeec 188px,#f2fff3 217px,#f2f9ea 229px,#db7405 440px,#de7205 506px)"></i><i style="top:320px;height:2px;background:linear-gradient(90deg,#1577be 0px,#1679be 22px,#ddf2ef 196px,#f4fff4 219px,#f3f4e3 238px,#dc7305 442px,#de7105 506px)"></i><i style="top:322px;height:2px;background:linear-gradient(90deg,#1576bf 0px,#1778bf 23px,#e5f6f2 203px,#f5fff5 221px,#de7205 444px,#df7105 506px)"></i><i style="top:324px;height:2px;background:linear-gradient(90deg,#1675bf 0px,#1777bf 23px,#ecf9f4 210px,#f7fef6 223px,#df7105 446px,#e07005 506px)"></i><i style="top:326px;height:2px;background:linear-gradient(90deg,#1675c0 0px,#1876c0 24px,#f4fdf7 217px,#f8fdf6 226px,#e07005 448px,#e17004 506px)"></i><i style="top:328px;height:2px;background:linear-gradient(90deg,#1674c0 0px,#1775c0 24px,#f8fff9 222px,#f9faf0 233px,#e17004 450px,#e26f04 506px)"></i><i style="top:330px;height:2px;background:linear-gradient(90deg,#1673c1 0px,#1774c1 24px,#fafffa 225px,#e26f04 452px,#e36e04 506px)"></i><i style="top:332px;height:2px;background:linear-gradient(90deg,#1672c1 0px,#1873c1 25px,#fcfffc 226px,#e36e04 454px,#e46e04 506px)"></i><i style="top:334px;height:2px;background:linear-gradient(90deg,#1671c2 0px,#1872c2 25px,#fdfffd 227px,#e46d04 456px,#e46d04 506px)"></i><i style="top:336px;height:2px;background:linear-gradient(90deg,#1770c2 0px,#1971c3 26px,#fefefd 229px,#e56d04 458px,#e56c04 506px)"></i><i style="top:338px;height:2px;background:linear-gradient(90deg,#176fc3 0px,#1870c3 26px,#fefdfe 229px,#e66c04 460px,#e66c04 506px)"></i><i style="top:340px;height:2px;background:linear-gradient(90deg,#176ec3 0px,#186fc3 26px,#fcfbff 227px,#feece1 259px,#e86b03 462px,#e76b04 506px)"></i><i style="top:342px;height:2px;background:linear-gradient(90deg,#176dc4 0px,#196ec4 27px,#faf9ff 226px,#fee6d8 269px,#e96a03 464px,#e86a03 506px)"></i><i style="top:344px;height:2px;background:linear-gradient(90deg,#176dc4 0px,#196dc5 27px,#f8f7ff 225px,#fee0ce 280px,#ea6903 466px,#e96a03 506px)"></i><i style="top:346px;height:2px;background:linear-gradient(90deg,#176cc4 0px,#196cc5 28px,#f6f4ff 223px,#fed9c3 292px,#eb6903 468px,#ea6903 506px)"></i><i style="top:348px;height:2px;background:linear-gradient(90deg,#176bc5 0px,#196bc6 28px,#f4f2ff 222px,#fed1b8 304px,#ec6803 470px,#eb6803 506px)"></i><i style="top:350px;height:2px;background:linear-gradient(90deg,#186ac5 0px,#196ac6 28px,#f1efff 220px,#fecbae 315px,#ed6703 473px,#ec6803 506px)"></i><i style="top:352px;height:2px;background:linear-gradient(90deg,#1869c6 0px,#1a69c7 29px,#efedff 218px,#f2eaf7 230px,#fec3a2 328px,#ee6603 475px,#ed6703 506px)"></i><i style="top:354px;height:2px;background:linear-gradient(90deg,#1868c6 0px,#1968c7 29px,#edeaff 217px,#f0e8f7 229px,#febc96 340px,#ef6502 477px,#ee6603 506px)"></i><i style="top:356px;height:2px;background:linear-gradient(90deg,#1867c7 0px,#1a67c8 30px,#eae7fe 215px,#ede7fb 223px,#feb58b 352px,#f06502 479px,#ef6502 506px)"></i><i style="top:358px;height:2px;background:linear-gradient(90deg,#1867c7 0px,#1a66c8 30px,#e7e5fe 213px,#ebe5fc 221px,#feae80 364px,#f16402 481px,#f06502 506px)"></i><i style="top:360px;height:2px;background:linear-gradient(90deg,#1866c8 0px,#1b65c9 31px,#e5e2fe 211px,#e9e3fd 219px,#fea675 376px,#f26302 483px,#f16402 506px)"></i><i style="top:362px;height:2px;background:linear-gradient(90deg,#1865c8 0px,#1a64c9 31px,#e2dffe 209px,#e7e1fd 218px,#fe9f6a 388px,#f46202 485px,#f26302 506px)"></i><i style="top:364px;height:2px;background:linear-gradient(90deg,#1964c9 0px,#1a63ca 31px,#dfdcfd 207px,#e5dffd 217px,#fe985f 400px,#f56102 487px,#f46202 506px)"></i><i style="top:366px;height:2px;background:linear-gradient(90deg,#1963c9 0px,#1b62cb 32px,#dddafd 205px,#e3dcfd 216px,#fe9154 412px,#f66101 489px,#f56102 506px)"></i><i style="top:368px;height:2px;background:linear-gradient(90deg,#1962ca 0px,#1a61cb 32px,#dad7fd 203px,#e1dafd 215px,#fe8a49 424px,#f76001 491px,#f66101 506px)"></i><i style="top:370px;height:2px;background:linear-gradient(90deg,#1961ca 0px,#1b60cc 33px,#d7d4fd 201px,#dfd8fe 213px,#fe823d 437px,#f85f01 493px,#f76001 506px)"></i><i style="top:372px;height:2px;background:linear-gradient(90deg,#1961ca 0px,#1b5fcc 33px,#d4d1fd 199px,#ddd6fe 212px,#fe7b32 449px,#f95e01 495px,#f85f01 506px)"></i><i style="top:374px;height:2px;background:linear-gradient(90deg,#1960cb 0px,#1c5ecd 34px,#d2cffd 198px,#dbd3fe 211px,#fe7427 461px,#fa5d01 497px,#f95e01 506px)"></i><i style="top:376px;height:2px;background:linear-gradient(90deg,#195fcb 0px,#1b5dcd 34px,#d0ccfc 196px,#d9d1fe 210px,#fe6d1c 473px,#fb5d01 499px,#fb5d01 506px)"></i><i style="top:378px;height:2px;background:linear-gradient(90deg,#1a5ecc 0px,#1c5dce 35px,#cdc9fc 194px,#d7cffe 209px,#fe6511 485px,#fc5c00 502px,#fc5c00 506px)"></i><i style="top:380px;height:2px;background:linear-gradient(90deg,#1a5dcc 0px,#1c5bce 35px,#cac6fc 192px,#d5cdfe 208px,#fe5e06 497px,#fd5b00 505px,#fd5b00 506px)"></i><i style="top:382px;height:2px;background:linear-gradient(90deg,#1a5dcd 0px,#1c5bcf 36px,#c7c4fc 190px,#d4cafe 207px,#ff5a00 506px)"></i><i style="top:384px;height:2px;background:linear-gradient(90deg,#1a5ccd 0px,#1c59cf 36px,#c5c1fc 188px,#d2c8fe 206px,#fe5902 504px,#fe5a01 506px)"></i><i style="top:386px;height:2px;background:linear-gradient(90deg,#1a5bce 0px,#1d59d0 37px,#c3bffc 187px,#d0c6fe 205px,#fb5805 499px,#fc5903 506px)"></i><i style="top:388px;height:2px;background:linear-gradient(90deg,#1a5ace 0px,#1c57d0 37px,#c0bcfb 185px,#cec3fe 204px,#f95708 495px,#fa5805 506px)"></i><i style="top:390px;height:2px;background:linear-gradient(90deg,#1a59ce 0px,#1d57d1 38px,#bdb9fb 183px,#ccc1fe 203px,#f6560a 491px,#f95707 506px)"></i><i style="top:392px;height:2px;background:linear-gradient(90deg,#1b59cf 0px,#1d55d2 38px,#bbb6fb 181px,#cabffe 202px,#f4550d 486px,#f75709 506px)"></i><i style="top:394px;height:2px;background:linear-gradient(90deg,#1b58cf 0px,#1e55d2 39px,#b9b4fb 180px,#c8bcfe 201px,#f15410 482px,#f6560b 506px)"></i><i style="top:396px;height:2px;background:linear-gradient(90deg,#1b57d0 0px,#1d53d3 39px,#b7b2fb 179px,#c6bafe 200px,#ef5313 477px,#f4550d 506px)"></i><i style="top:398px;height:2px;background:linear-gradient(90deg,#1b56d0 0px,#1e53d3 40px,#b4affb 177px,#c4b8fe 199px,#ed5216 473px,#f2550f 506px)"></i><i style="top:400px;height:2px;background:linear-gradient(90deg,#1b55d1 0px,#1d51d4 40px,#b2adfb 176px,#c2b5fe 198px,#ea5119 469px,#f15411 506px)"></i><i style="top:402px;height:2px;background:linear-gradient(90deg,#1b55d1 0px,#1e51d4 41px,#b0aafb 174px,#c0b3fe 197px,#e8501c 464px,#f05312 506px)"></i><i style="top:404px;height:2px;background:linear-gradient(90deg,#1b54d1 0px,#1e4fd5 41px,#aea8fb 173px,#beb1fe 196px,#e54f1f 460px,#ee5314 506px)"></i><i style="top:406px;height:2px;background:linear-gradient(90deg,#1c53d2 0px,#1e4fd5 42px,#aca5fb 172px,#bcaefe 195px,#e34e21 456px,#ed5216 506px)"></i><i style="top:408px;height:2px;background:linear-gradient(90deg,#1c52d2 0px,#1e4dd6 42px,#aaa3fb 171px,#baacfe 194px,#e14d25 451px,#eb5217 506px)"></i><i style="top:410px;height:2px;background:linear-gradient(90deg,#1c52d3 0px,#1f4dd6 43px,#a7a0fa 169px,#b8aafe 193px,#de4c27 447px,#ea5119 506px)"></i><i style="top:412px;height:2px;background:linear-gradient(90deg,#1c51d3 0px,#1e4bd7 43px,#a69efa 168px,#b7a7fe 192px,#dc4b2a 442px,#e9511b 506px)"></i><i style="top:414px;height:2px;background:linear-gradient(90deg,#1c50d4 0px,#1f4ad8 44px,#a49cfa 167px,#b5a5fe 191px,#d94a2d 438px,#e7501c 506px)"></i><i style="top:416px;height:2px;background:linear-gradient(90deg,#1c4fd4 0px,#1e49d8 44px,#a29afa 166px,#b3a3fe 190px,#d74930 434px,#e6501e 506px)"></i><i style="top:418px;height:2px;background:linear-gradient(90deg,#1c4ed4 0px,#1f48d9 45px,#a097fa 165px,#b1a1fe 189px,#d44833 429px,#e54f1f 506px)"></i><i style="top:420px;height:2px;background:linear-gradient(90deg,#1c4ed5 0px,#2048d9 46px,#9e95fb 164px,#af9efe 188px,#d24736 425px,#e44e21 506px)"></i><i style="top:422px;height:2px;background:linear-gradient(90deg,#1d4dd5 0px,#1f46da 46px,#9d93fb 163px,#ad9cfe 187px,#d04638 421px,#e34e22 506px)"></i><i style="top:424px;height:2px;background:linear-gradient(90deg,#1d4cd6 0px,#2046da 47px,#9a90fa 161px,#ab9afe 186px,#cd453c 416px,#e14d23 506px)"></i><i style="top:426px;height:2px;background:linear-gradient(90deg,#1d4cd6 0px,#2044db 47px,#988efa 160px,#a997fe 185px,#cb443e 412px,#e04d25 506px)"></i><i style="top:428px;height:2px;background:linear-gradient(90deg,#1d4bd6 0px,#2043db 48px,#968cfa 159px,#a795fe 184px,#c94341 408px,#df4d26 506px)"></i><i style="top:430px;height:2px;background:linear-gradient(90deg,#1d4ad7 0px,#2143dc 49px,#9489fa 158px,#a593fe 183px,#c64244 403px,#de4c27 506px)"></i><i style="top:432px;height:2px;background:linear-gradient(90deg,#1d49d7 0px,#2041dc 49px,#9287fa 156px,#a390fe 182px,#c44147 399px,#dd4c29 506px)"></i><i style="top:434px;height:2px;background:linear-gradient(90deg,#1d49d8 0px,#2141dd 50px,#9084fa 155px,#a18efe 181px,#c1404a 394px,#dc4b2a 504px,#dc4b2a 506px)"></i><i style="top:436px;height:2px;background:linear-gradient(90deg,#1e48d8 0px,#203fdd 50px,#8e82fa 154px,#9f8cfe 180px,#bf3f4d 390px,#d94a2d 498px,#db4b2b 506px)"></i><i style="top:438px;height:2px;background:linear-gradient(90deg,#1e47d8 0px,#213ede 51px,#8c80fa 153px,#9d89fe 179px,#bc3e50 385px,#d74930 492px,#da4a2d 506px)"></i><i style="top:440px;height:2px;background:linear-gradient(90deg,#1e46d9 0px,#213edf 52px,#8a7efa 152px,#9b87fe 178px,#ba3d53 381px,#d54832 487px,#d94a2e 506px)"></i><i style="top:442px;height:2px;background:linear-gradient(90deg,#1e46d9 0px,#213cdf 52px,#877bfa 150px,#9985fe 177px,#b73c56 376px,#d34735 480px,#d8492f 506px)"></i><i style="top:444px;height:2px;background:linear-gradient(90deg,#1e45d9 0px,#213be0 53px,#8679fa 149px,#9882fe 176px,#b53b58 372px,#d14637 475px,#d74930 506px)"></i><i style="top:446px;height:2px;background:linear-gradient(90deg,#1e44da 0px,#223be0 54px,#8476fa 148px,#9680fe 175px,#b33a5b 368px,#cf463a 470px,#d64931 506px)"></i><i style="top:448px;height:2px;background:linear-gradient(90deg,#1e44da 0px,#2139e1 54px,#8274fa 147px,#947efe 174px,#b0395e 363px,#cc453d 464px,#d54832 506px)"></i><i style="top:450px;height:2px;background:linear-gradient(90deg,#1e43db 0px,#2238e1 55px,#8072fa 146px,#927cfe 173px,#ae3861 359px,#ca443f 459px,#d44833 506px)"></i><i style="top:452px;height:2px;background:linear-gradient(90deg,#1e42db 0px,#2238e2 56px,#7e70fa 145px,#9079fe 172px,#ab3764 354px,#c84342 453px,#d34735 506px)"></i><i style="top:454px;height:2px;background:linear-gradient(90deg,#1f42db 0px,#2337e3 57px,#7c6dfa 144px,#8e77fe 171px,#a93667 350px,#c64244 448px,#d24736 506px)"></i><i style="top:456px;height:2px;background:linear-gradient(90deg,#1f41dc 0px,#2235e3 57px,#7a6bfa 142px,#8c75fe 170px,#a6356a 345px,#c44147 442px,#d14737 506px)"></i><i style="top:458px;height:2px;background:linear-gradient(90deg,#1f40dc 0px,#2334e4 58px,#7868fa 141px,#8a72fe 169px,#a4346d 341px,#c24049 437px,#d04638 506px)"></i><i style="top:460px;height:2px;background:linear-gradient(90deg,#1f3fdd 0px,#2334e4 59px,#7666fa 140px,#8870fe 168px,#a23370 336px,#bf3f4c 431px,#d04639 506px)"></i><i style="top:462px;height:2px;background:linear-gradient(90deg,#1f3fdd 0px,#2332e4 59px,#7464fa 139px,#866efe 167px,#9f3273 332px,#bd3e4f 426px,#cf463a 506px)"></i><i style="top:464px;height:2px;background:linear-gradient(90deg,#1f3edd 0px,#2331e5 60px,#7262fa 138px,#846bfe 166px,#9d3175 328px,#bb3d51 421px,#ce453b 506px)"></i><i style="top:466px;height:2px;background:linear-gradient(90deg,#1f3dde 0px,#2330e6 61px,#705ffa 137px,#8269fe 165px,#9a2f78 323px,#b93c54 415px,#cd453c 506px)"></i><i style="top:468px;height:2px;background:linear-gradient(90deg,#1f3dde 0px,#2430e6 62px,#6e5dfa 136px,#8067fe 164px,#982f7b 319px,#b73c56 411px,#cc453d 506px)"></i><i style="top:470px;height:2px;background:linear-gradient(90deg,#203cde 0px,#232ee7 62px,#6d5bfa 135px,#7e64fe 163px,#952d7e 314px,#b53b59 405px,#cc443e 506px)"></i><i style="top:472px;height:2px;background:linear-gradient(90deg,#203bdf 0px,#242de7 63px,#6b58fa 134px,#7c62fe 162px,#932c81 310px,#b23a5c 400px,#cb443f 506px)"></i><i style="top:474px;height:2px;background:linear-gradient(90deg,#203bdf 0px,#242ce8 64px,#6a57fa 134px,#7b60fe 161px,#912b84 305px,#b0395e 394px,#ca443f 506px)"></i><i style="top:476px;height:2px;background:linear-gradient(90deg,#203adf 0px,#252ce9 65px,#6854fa 133px,#795dfe 160px,#8e2a87 301px,#ae3861 389px,#c94340 506px)"></i><i style="top:478px;height:2px;background:linear-gradient(90deg,#203ae0 0px,#242ae9 65px,#6652fa 132px,#775bfe 159px,#8c298a 297px,#ac3763 385px,#c94341 506px)"></i><i style="top:480px;height:2px;background:linear-gradient(90deg,#2039e0 0px,#2429e9 66px,#6450fa 131px,#7559fe 158px,#89288d 292px,#aa3666 379px,#c74243 500px,#c84342 506px)"></i><i style="top:482px;height:2px;background:linear-gradient(90deg,#2038e0 0px,#2528ea 67px,#634efb 131px,#7357fe 157px,#87278f 288px,#a83569 374px,#c54146 493px,#c74243 506px)"></i><i style="top:484px;height:2px;background:linear-gradient(90deg,#2038e1 0px,#2527eb 68px,#614cfb 130px,#7154fe 156px,#852693 283px,#a5346c 368px,#c34048 486px,#c64244 506px)"></i><i style="top:486px;height:2px;background:linear-gradient(90deg,#2037e1 0px,#2627eb 69px,#604afb 130px,#6f52fe 155px,#822595 279px,#a3336e 364px,#c1404a 481px,#c64245 506px)"></i><i style="top:488px;height:2px;background:linear-gradient(90deg,#2136e1 0px,#2525ec 69px,#5e48fb 129px,#6d50fe 154px,#802498 274px,#a13271 358px,#bf3f4d 474px,#c54145 506px)"></i><i style="top:490px;height:2px;background:linear-gradient(90deg,#2136e2 0px,#2524ec 70px,#5c45fb 128px,#6b4dfe 153px,#7d239b 270px,#9f3173 354px,#bd3e4f 469px,#c44146 506px)"></i><i style="top:492px;height:2px;background:linear-gradient(90deg,#2135e2 0px,#2623ed 71px,#5b43fb 128px,#694bfe 152px,#7b229e 266px,#9d3076 349px,#bb3d51 463px,#c44147 506px)"></i><i style="top:494px;height:2px;background:linear-gradient(90deg,#2135e2 0px,#2622ed 72px,#5941fb 127px,#6749fe 151px,#7821a1 261px,#9a2f79 343px,#b93c54 455px,#c34148 506px)"></i><i style="top:496px;height:2px;background:linear-gradient(90deg,#2134e3 0px,#2621ee 73px,#573ffb 126px,#6546fe 150px,#7620a4 257px,#982f7b 339px,#b73c56 451px,#c24049 506px)"></i><i style="top:498px;height:2px;background:linear-gradient(90deg,#2133e3 0px,#2720ef 74px,#563dfb 126px,#6344fe 149px,#741fa7 252px,#962e7e 333px,#b53b59 443px,#c24049 506px)"></i><i style="top:500px;height:2px;background:linear-gradient(90deg,#2133e3 0px,#271fef 75px,#553bfb 126px,#6142fe 148px,#711eaa 248px,#942d80 329px,#b33a5b 438px,#c1404a 506px)"></i><i style="top:502px;height:2px;background:linear-gradient(90deg,#2132e4 0px,#271ef0 76px,#5339fb 125px,#5f3ffe 147px,#6f1dad 243px,#912c83 323px,#b1395e 431px,#c0404b 506px)"></i><i style="top:504px;height:2px;background:linear-gradient(90deg,#2132e4 0px,#261df0 76px,#5237fc 125px,#5e3dfe 146px,#6c1caf 239px,#8f2b86 318px,#af3860 425px,#c03f4c 506px)"></i><i style="top:506px;height:2px;background:linear-gradient(90deg,#2131e4 0px,#271cf1 77px,#5035fc 124px,#5c3bfe 145px,#6a1bb3 234px,#8d2a88 313px,#ad3762 419px,#bf3f4c 506px)"></i><i style="top:508px;height:2px;background:linear-gradient(90deg,#2230e5 0px,#271bf1 78px,#4e33fc 124px,#5a38fd 145px,#681ab5 230px,#8b298b 308px,#ab3665 413px,#bf3f4d 506px)"></i><i style="top:510px;height:2px;background:linear-gradient(90deg,#2230e5 0px,#271af2 79px,#4d31fc 124px,#5836fd 144px,#6519b8 226px,#89288d 304px,#a93667 409px,#be3f4e 506px)"></i><i style="top:512px;height:2px;background:linear-gradient(90deg,#222fe5 0px,#2719f2 80px,#4c2ffc 124px,#5633fd 143px,#6318bb 221px,#862790 298px,#a7356a 401px,#bd3e4e 506px)"></i><i style="top:514px;height:2px;background:linear-gradient(90deg,#222fe6 0px,#2818f3 82px,#4b2dfd 125px,#5431fd 142px,#6017be 217px,#842693 294px,#a5346c 397px,#bd3e4f 506px)"></i><i style="top:516px;height:2px;background:linear-gradient(90deg,#222ee6 0px,#2817f4 83px,#4a2bfd 125px,#522ffd 141px,#5e16c1 212px,#822596 288px,#a3336e 390px,#bc3e50 506px)"></i><i style="top:518px;height:2px;background:linear-gradient(90deg,#222de6 0px,#2816f4 84px,#492afd 126px,#502dfd 140px,#5b15c4 208px,#802498 284px,#a13270 385px,#bc3e51 506px)"></i><i style="top:520px;height:2px;background:linear-gradient(90deg,#222de7 0px,#2815f5 85px,#4928fd 127px,#4e2afd 139px,#5914c7 203px,#7d239b 278px,#9f3173 378px,#bb3d51 506px)"></i><i style="top:522px;height:2px;background:linear-gradient(90deg,#222ce7 0px,#2814f5 86px,#4927fe 130px,#4c28fc 139px,#5713ca 199px,#7b229d 274px,#9d3175 373px,#bb3d52 506px)"></i><i style="top:524px;height:2px;background:linear-gradient(90deg,#222ce7 0px,#2813f6 87px,#4a26ff 133px,#5412cc 195px,#7921a0 269px,#9b3078 368px,#ba3d53 503px,#ba3d52 506px)"></i><i style="top:526px;height:2px;background:linear-gradient(90deg,#222be8 0px,#2912f6 89px,#4824ff 133px,#5211d0 190px,#7721a3 264px,#992f7a 362px,#b83c56 495px,#ba3d53 506px)"></i><i style="top:528px;height:2px;background:linear-gradient(90deg,#232be8 0px,#2911f7 90px,#4622ff 133px,#4f10d2 186px,#7520a6 259px,#972e7d 356px,#b63b58 488px,#b93c54 506px)"></i><i style="top:530px;height:2px;background:linear-gradient(90deg,#232ae8 0px,#2910f7 91px,#441fff 132px,#4d0fd5 181px,#721fa8 254px,#952d7f 350px,#b43a5a 481px,#b93c54 506px)"></i><i style="top:532px;height:2px;background:linear-gradient(90deg,#232ae8 0px,#2a0ff8 93px,#421dfe 132px,#4b0ed8 177px,#711eab 250px,#932c81 346px,#b23a5c 476px,#b83c55 506px)"></i><i style="top:534px;height:2px;background:linear-gradient(90deg,#2329e9 0px,#290ef9 94px,#411afe 131px,#480ddb 173px,#6e1dad 245px,#912c84 340px,#b1395e 469px,#b83c56 506px)"></i><i style="top:536px;height:2px;background:linear-gradient(90deg,#2328e9 0px,#2a0df9 96px,#3f18fe 130px,#460cde 168px,#6c1cb0 240px,#8f2b86 334px,#ae3860 461px,#b73c56 506px)"></i><i style="top:538px;height:2px;background:linear-gradient(90deg,#2328e9 0px,#2a0cfa 98px,#3d16fe 129px,#430be1 164px,#6a1bb3 235px,#8d2a89 329px,#ad3762 455px,#b73b57 506px)"></i><i style="top:540px;height:2px;background:linear-gradient(90deg,#2327ea 0px,#2a0bfa 100px,#3b13fe 128px,#410ae4 159px,#671ab6 230px,#8b298b 323px,#ab3665 448px,#b63b57 506px)"></i><i style="top:542px;height:2px;background:linear-gradient(90deg,#2327ea 0px,#2b0afb 102px,#3911fd 128px,#3e09e6 155px,#6619b8 226px,#89288d 318px,#a93667 442px,#b63b58 506px)"></i><i style="top:544px;height:2px;background:linear-gradient(90deg,#2326ea 0px,#2b08fc 104px,#370efd 127px,#3c08e9 151px,#6318bb 221px,#872790 313px,#a73569 436px,#b53b58 506px)"></i><i style="top:546px;height:2px;background:linear-gradient(90deg,#2326ea 0px,#2b07fc 106px,#350cfd 126px,#3a07ec 146px,#6117bd 216px,#852692 307px,#a6346b 429px,#b53b59 506px)"></i><i style="top:548px;height:2px;background:linear-gradient(90deg,#2425eb 0px,#2b06fd 108px,#330afd 125px,#3706ef 142px,#5f16c0 211px,#832595 301px,#a4336d 422px,#b43a5a 506px)"></i><i style="top:550px;height:2px;background:linear-gradient(90deg,#2425eb 0px,#2b05fd 111px,#3108fd 124px,#3505f1 138px,#5d15c2 207px,#812597 297px,#a2336f 417px,#b43a5a 506px)"></i><i style="top:552px;height:2px;background:linear-gradient(90deg,#2424eb 0px,#2b04fe 113px,#2f05fd 123px,#3404f3 135px,#5b15c4 204px,#802498 294px,#a13271 414px,#b33a5b 506px)"></i><i style="top:554px;height:2px;background:linear-gradient(90deg,#2424ec 0px,#2b03fe 115px,#2d03fc 123px,#5512cc 190px,#7a22a0 277px,#9b3077 392px,#b33a5b 506px)"></i><i style="top:556px;height:2px;background:linear-gradient(90deg,#2423ec 0px,#2b01fe 120px,#5311ce 187px,#7821a1 274px,#9a2f78 389px,#b23a5c 506px)"></i><i style="top:558px;height:2px;background:linear-gradient(90deg,#2423ec 0px,#2b00fe 119px,#5311ce 186px,#7821a2 273px,#9a2f79 388px,#b2395c 506px)"></i></div><div style="position:absolute;left:50px;top:44px;width:3px;height:1px;background:#707880"></div><div style="position:absolute;left:51px;top:43px;width:1px;height:3px;background:#707880"></div><div class="lb" style="left:57px;top:40.3px">520nm</div><div style="position:absolute;left:106px;top:63px;width:3px;height:1px;background:#707880"></div><div style="position:absolute;left:107px;top:62px;width:1px;height:3px;background:#707880"></div><div class="lb" style="left:112px;top:59.1px">530nm</div><div style="position:absolute;left:157px;top:98px;width:3px;height:1px;background:#707880"></div><div style="position:absolute;left:158px;top:97px;width:1px;height:3px;background:#707880"></div><div class="lb" style="left:164px;top:93.7px">540nm</div><div style="position:absolute;left:207px;top:139px;width:3px;height:1px;background:#707880"></div><div style="position:absolute;left:208px;top:138px;width:1px;height:3px;background:#707880"></div><div class="lb" style="left:213px;top:135.3px">550nm</div><div style="position:absolute;left:256px;top:185px;width:3px;height:1px;background:#707880"></div><div style="position:absolute;left:257px;top:184px;width:1px;height:3px;background:#707880"></div><div class="lb" style="left:263px;top:180.8px">560nm</div><div style="position:absolute;left:305px;top:232px;width:3px;height:1px;background:#707880"></div><div style="position:absolute;left:306px;top:231px;width:1px;height:3px;background:#707880"></div><div class="lb" style="left:311px;top:227.6px">570nm</div><div style="position:absolute;left:352px;top:277px;width:3px;height:1px;background:#707880"></div><div style="position:absolute;left:353px;top:276px;width:1px;height:3px;background:#707880"></div><div class="lb" style="left:359px;top:273.3px">580nm</div><div style="position:absolute;left:395px;top:319px;width:3px;height:1px;background:#707880"></div><div style="position:absolute;left:396px;top:318px;width:1px;height:3px;background:#707880"></div><div class="lb" style="left:402px;top:315.2px">590nm</div><div style="position:absolute;left:431px;top:354px;width:3px;height:1px;background:#707880"></div><div style="position:absolute;left:432px;top:353px;width:1px;height:3px;background:#707880"></div><div class="lb" style="left:437px;top:349.9px">600nm</div><div style="position:absolute;left:458px;top:380px;width:3px;height:1px;background:#707880"></div><div style="position:absolute;left:459px;top:379px;width:1px;height:3px;background:#707880"></div><div class="lb" style="left:464px;top:375.7px">610nm</div><div style="position:absolute;left:475px;top:397px;width:3px;height:1px;background:#707880"></div><div style="position:absolute;left:476px;top:396px;width:1px;height:3px;background:#707880"></div><div class="lb" style="left:482px;top:393.0px">620nm</div><div style="position:absolute;left:494px;top:415px;width:3px;height:1px;background:#707880"></div><div style="position:absolute;left:495px;top:414px;width:1px;height:3px;background:#707880"></div><div class="lb" style="left:501px;top:411.4px">640nm</div><div style="position:absolute;left:505px;top:426px;width:3px;height:1px;background:#707880"></div><div style="position:absolute;left:506px;top:425px;width:1px;height:3px;background:#707880"></div><div class="lb" style="left:512px;top:421.9px">780nm</div><div style="position:absolute;left:9px;top:101px;width:3px;height:1px;background:#707880"></div><div style="position:absolute;left:10px;top:100px;width:1px;height:3px;background:#707880"></div><div class="lb" style="left:15px;top:96.4px">510nm</div><div style="position:absolute;left:5px;top:243px;width:3px;height:1px;background:#707880"></div><div style="position:absolute;left:6px;top:242px;width:1px;height:3px;background:#707880"></div><div class="lb" style="left:11px;top:238.6px">500nm</div><div style="position:absolute;left:30px;top:406px;width:3px;height:1px;background:#707880"></div><div style="position:absolute;left:31px;top:405px;width:1px;height:3px;background:#707880"></div><div class="lb l" style="right:598px;top:401.9px">490nm</div><div style="position:absolute;left:62px;top:515px;width:3px;height:1px;background:#707880"></div><div style="position:absolute;left:63px;top:514px;width:1px;height:3px;background:#707880"></div><div class="lb l" style="right:567px;top:510.8px">480nm</div><div style="position:absolute;left:84px;top:565px;width:3px;height:1px;background:#707880"></div><div style="position:absolute;left:85px;top:564px;width:1px;height:3px;background:#707880"></div><div class="lb l" style="right:544px;top:561.1px">470nm</div><div style="position:absolute;left:98px;top:584px;width:3px;height:1px;background:#707880"></div><div style="position:absolute;left:99px;top:583px;width:1px;height:3px;background:#707880"></div><div class="lb l" style="right:530px;top:580.0px">460nm</div><div style="position:absolute;left:107px;top:592px;width:3px;height:1px;background:#707880"></div><div style="position:absolute;left:108px;top:591px;width:1px;height:3px;background:#707880"></div><div class="lb l" style="right:522px;top:588.0px">450nm</div><div style="position:absolute;left:119px;top:601px;width:3px;height:1px;background:#707880"></div><div style="position:absolute;left:120px;top:600px;width:1px;height:3px;background:#707880"></div><div class="lb l" style="right:510px;top:596.5px">380nm</div><div style="position:absolute;left:229px;top:380px;width:3px;height:1px;background:#707880"></div><div style="position:absolute;left:230px;top:379px;width:1px;height:3px;background:#707880"></div><div class="lb" style="left:235px;top:376.2px">CIE White Point</div></div><div style="position:absolute;left:73px;top:33px;width:1px;height:606px;background:#a8a8a8"></div><svg style="position:absolute;left:0;top:0" width="733" height="686" viewBox="0 0 733 686"><path d="M142.5 34V638M211.5 34V638M280.5 34V638M349.5 34V638M417.5 34V638M486.5 34V638M555.5 34V638M624.5 34V638M73 604.5H694M73 571.5H694M73 537.5H694M73 504.5H694M73 470.5H694M73 437.5H694M73 403.5H694M73 370.5H694M73 336.5H694M73 302.5H694M73 269.5H694M73 235.5H694M73 202.5H694M73 168.5H694M73 135.5H694M73 101.5H694M73 68.5H694" stroke="#9e9c00" stroke-width="1" fill="none" shape-rendering="crispEdges"/><polyline points="243.3,474.8 246.3,470.6 249.3,466.4 252.3,462.4 255.3,458.5 258.3,454.7 261.3,451.0 264.3,447.4 267.3,443.9 270.3,440.5 273.3,437.1 276.3,433.9 279.3,430.8 282.3,427.7 285.3,424.7 288.3,421.8 291.3,419.0 294.3,416.3 297.3,413.6 300.3,411.0 303.3,408.4 306.3,406.0 309.3,403.6 312.3,401.2 315.3,399.0 318.3,396.8 321.3,394.6 324.3,392.6 327.3,390.5 330.3,388.6 333.3,386.7 336.3,384.9 339.3,383.1 342.3,381.4 345.3,379.8 348.3,378.2 351.3,376.7 354.3,375.2 357.3,373.8 360.3,372.5 363.3,371.2 366.3,370.0 369.3,368.9 372.3,367.8 375.3,366.8 378.3,365.8 381.3,364.9 384.3,364.1 387.3,363.4 390.3,362.7 393.3,362.1 396.3,361.5 399.3,361.0 402.3,360.6 405.3,360.3 408.3,360.0 411.3,359.8 414.3,359.6 417.3,359.6 420.3,359.6 423.3,359.7 426.3,359.9 429.3,360.1 432.3,360.4 435.3,360.8 438.3,361.3 441.3,361.8 444.3,362.4 447.3,363.1 450.3,363.9 453.3,364.7 456.3,365.6 459.3,366.7 462.3,367.7 465.3,368.9 468.3,370.1 471.3,371.5 474.3,372.8 477.3,374.3 480.3,375.9 483.3,377.5 486.3,379.2 489.3,381.0 492.3,382.8 495.3,384.8 498.3,386.8 501.3,388.9 504.3,391.0 507.3,393.2 510.3,395.5 513.3,397.9 516.3,400.3 519.3,402.8 522.3,405.4 525.3,408.0 528.3,410.7 531.3,413.5 534.3,416.3 537.3,419.2 540.3,422.1 543.3,425.1 543.4,425.2" stroke="#7c8088" stroke-width="1" fill="none" shape-rendering="crispEdges"/><polygon points="280.5,408.5 376.5,348.5 417.5,343.5 417.5,382.5 376.5,382.5 280.5,453.5" stroke="#000" stroke-width="1" fill="none"/><path d="M376.5 348.5V382.5" stroke="#000" stroke-width="1" fill="none"/><rect x="279.0" y="407.0" width="3" height="3" fill="#000"/><rect x="375.0" y="347.0" width="3" height="3" fill="#000"/><rect x="416.0" y="342.0" width="3" height="3" fill="#000"/><rect x="416.0" y="381.0" width="3" height="3" fill="#000"/><rect x="375.0" y="381.0" width="3" height="3" fill="#000"/><rect x="279.0" y="452.0" width="3" height="3" fill="#000"/><path d="M373.5 34V638M73 366.5H694" stroke="#ff0000" stroke-width="1" shape-rendering="crispEdges"/><circle cx="373.5" cy="366.5" r="2.6" fill="#ff0000"/><path d="M73.5 640V645M66 638.5H71M142.5 640V645M66 571.5H71M211.5 640V645M66 504.5H71M280.5 640V645M66 437.5H71M349.5 640V645M66 370.5H71M417.5 640V645M66 302.5H71M486.5 640V645M66 235.5H71M555.5 640V645M66 168.5H71M624.5 640V645M66 101.5H71M693.5 640V645M66 34.5H71" stroke="#000" stroke-width="1" shape-rendering="crispEdges"/></svg><div style="position:absolute;left:72px;top:32px;width:624px;height:1px;background:#e2ded2"></div><div style="position:absolute;left:695px;top:32px;width:1px;height:609px;background:#e2ded2"></div><div style="position:absolute;left:72px;top:33px;width:622px;height:1px;background:#a8a8a8"></div><div style="position:absolute;left:72px;top:33px;width:1px;height:606px;background:#b4b4b4"></div><div style="position:absolute;left:72px;top:638px;width:622px;height:1px;background:#b8b8b8"></div><div style="position:absolute;left:72px;top:639px;width:623px;height:1px;background:#ffffff"></div><div style="position:absolute;left:694px;top:33px;width:1px;height:607px;background:#ffffff"></div><div class="t" style="left:42px;top:647px;width:60px;text-align:center">0.0000</div><div class="t" style="left:0px;top:633px;width:64px;text-align:right">0.0000</div><div class="t" style="left:111px;top:647px;width:60px;text-align:center">0.1000</div><div class="t" style="left:0px;top:566px;width:64px;text-align:right">0.1000</div><div class="t" style="left:180px;top:647px;width:60px;text-align:center">0.2000</div><div class="t" style="left:0px;top:499px;width:64px;text-align:right">0.2000</div><div class="t" style="left:249px;top:647px;width:60px;text-align:center">0.3000</div><div class="t" style="left:0px;top:432px;width:64px;text-align:right">0.3000</div><div class="t" style="left:318px;top:647px;width:60px;text-align:center">0.4000</div><div class="t" style="left:0px;top:365px;width:64px;text-align:right">0.4000</div><div class="t" style="left:386px;top:647px;width:60px;text-align:center">0.5000</div><div class="t" style="left:0px;top:297px;width:64px;text-align:right">0.5000</div><div class="t" style="left:455px;top:647px;width:60px;text-align:center">0.6000</div><div class="t" style="left:0px;top:230px;width:64px;text-align:right">0.6000</div><div class="t" style="left:524px;top:647px;width:60px;text-align:center">0.7000</div><div class="t" style="left:0px;top:163px;width:64px;text-align:right">0.7000</div><div class="t" style="left:593px;top:647px;width:60px;text-align:center">0.8000</div><div class="t" style="left:0px;top:96px;width:64px;text-align:right">0.8000</div><div class="t" style="left:662px;top:647px;width:60px;text-align:center">0.9000</div><div class="t" style="left:0px;top:29px;width:64px;text-align:right">0.9000</div><div class="t" style="left:380.5px;top:666px;font-size:12px">x</div><div class="t" style="left:15px;top:331px;font-size:12px;transform:rotate(-90deg);transform-origin:5px 5px">y</div></body></html>
